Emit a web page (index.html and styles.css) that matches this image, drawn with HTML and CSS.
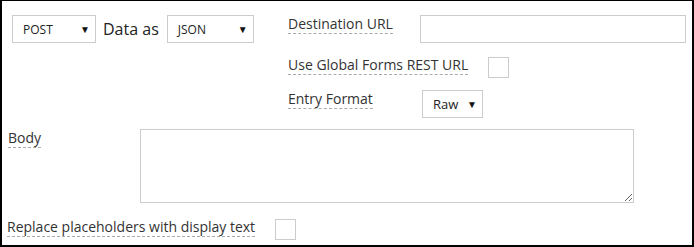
FILE: index.html
```html
<!DOCTYPE html>
<html>
  <head>
    <meta charset="utf-8">
    <link rel="stylesheet" href="styles.css">
  </head>
  <body>
    <div class="panel">
      <div class="top">
        <div class="method">
          <div class="select select-post"><span>POST</span><span class="arrow">&#9660;</span></div>
          <span class="data-as">Data as</span>
          <div class="select select-json"><span>JSON</span><span class="arrow">&#9660;</span></div>
        </div>
        <div class="fields">
          <div class="field field-url">
            <div class="name"><span class="label">Destination URL</span></div>
            <input class="text url" type="text">
          </div>
          <div class="field field-global">
            <div class="name name-auto"><span class="label">Use Global Forms REST URL</span></div>
            <span class="check check-global"></span>
          </div>
          <div class="field field-format">
            <div class="name"><span class="label">Entry Format</span></div>
            <div class="select select-raw"><span>Raw</span><span class="arrow">&#9660;</span></div>
          </div>
        </div>
      </div>
      <div class="body-row">
        <div class="name"><span class="label">Body</span></div>
        <textarea class="body-text"></textarea>
      </div>
      <div class="replace-row">
        <span class="label">Replace placeholders with display text</span>
        <span class="check check-replace"></span>
      </div>
    </div>
  </body>
</html>
```

FILE: styles.css
```css
html, body {
  margin: 0;
  padding: 0;
  background: #fff;
  font-family: "Open Sans", sans-serif;
  color: #333;
}

.panel {
  width: 694px;
  height: 247px;
  box-sizing: border-box;
  border: 2px solid #000;
  border-top-width: 1px;
  padding: 13px 6px 0 6px;
}

.top {
  display: flex;
  align-items: flex-start;
}

.method {
  width: 276px;
  padding: 1px 0 0 4px;
  display: flex;
  align-items: center;
}

.data-as {
  font-size: 16px;
  color: #222;
  margin: 0 8px 0 7px;
  line-height: 28px;
}

.select {
  box-sizing: border-box;
  height: 28px;
  border: 1px solid #ccc;
  display: flex;
  align-items: center;
  justify-content: space-between;
  padding: 0 5px 0 10px;
  font-size: 12px;
  color: #222;
  background: #fff;
}

.select .arrow {
  font-size: 10px;
  color: #111;
}

.select-post {
  width: 84px;
}

.select-json {
  width: 87px;
}

.select-raw {
  width: 61px;
  margin: 1px 0 0 2px;
  font-size: 13px;
}

.fields {
  display: flex;
  flex-direction: column;
}

.field {
  display: flex;
  align-items: flex-start;
}

.field-url {
  height: 41px;
}

.field-global {
  height: 34px;
}

.name {
  width: 132px;
  flex: none;
  display: flex;
  align-items: flex-start;
}

.name-auto {
  width: auto;
  margin-right: 20px;
}

.label {
  display: block;
  font-size: 14px;
  line-height: 19px;
  color: #333;
  border-bottom: 1px dashed #aaa;
  white-space: nowrap;
}

.text {
  box-sizing: border-box;
  width: 266px;
  height: 28px;
  margin: 1px 0 0 0;
  border: 1px solid #ccc;
  padding: 0 6px;
}

.check {
  display: block;
  box-sizing: border-box;
  width: 21px;
  height: 21px;
  border: 1px solid #ccc;
}

.check-global {
  margin-top: 2px;
}

.body-row {
  margin-top: 10px;
  display: flex;
  align-items: flex-start;
}

.body-text {
  box-sizing: border-box;
  width: 494px;
  height: 74px;
  margin: 1px 0 0 0;
  border: 1px solid #ccc;
  resize: vertical;
  font-family: "Open Sans", sans-serif;
}

.replace-row {
  margin: 14px 0 0 -1px;
  display: flex;
  align-items: flex-start;
}

.check-replace {
  margin: 2px 0 0 20px;
}
```
